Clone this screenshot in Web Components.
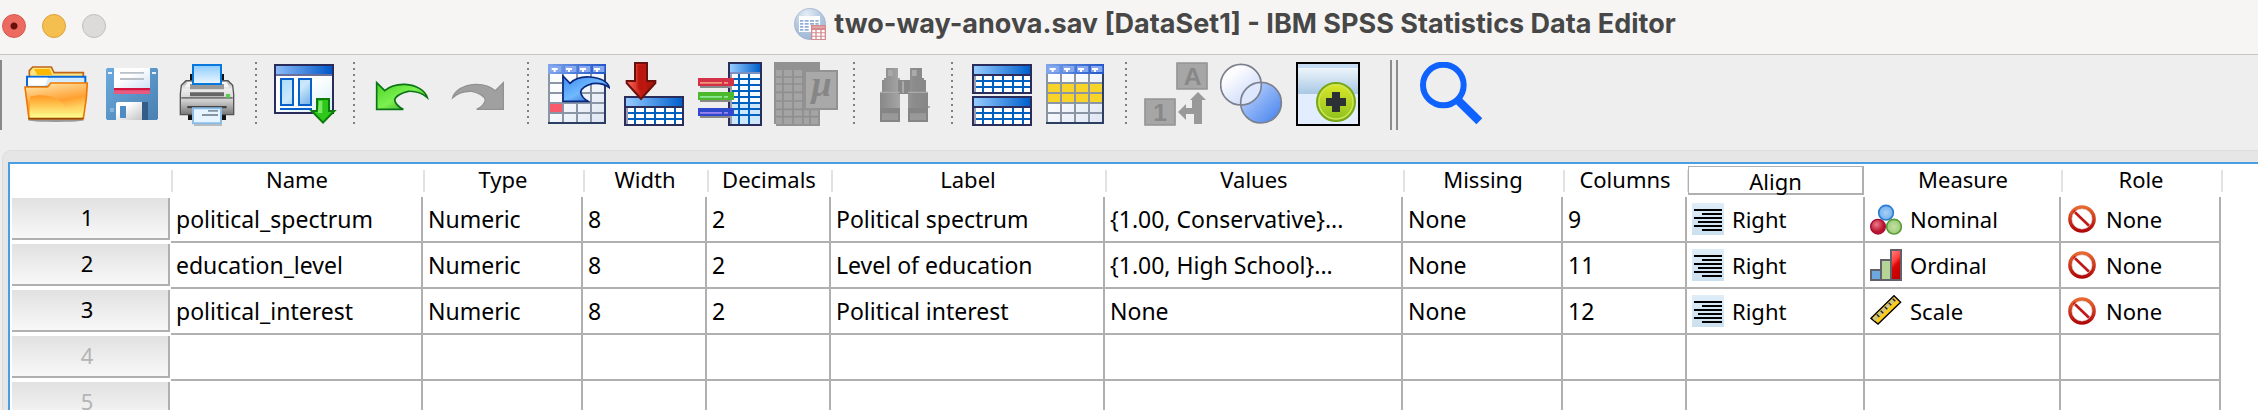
<!DOCTYPE html>
<html lang="en">
<head>
<meta charset="utf-8">
<title>two-way-anova.sav [DataSet1] - IBM SPSS Statistics Data Editor</title>
<style>
  html, body { margin: 0; height: 100%; overflow: hidden; background: #eeeeee; }
  body { font-family: "Noto Sans", "Open Sans", sans-serif; color: #000; }
</style>
</head>
<body>
<data-editor>
  <title-bar slot="title">two-way-anova.sav [DataSet1] - IBM SPSS Statistics Data Editor</title-bar>
  <tool-bar slot="tools">
    <tool-button icon="open" label="Open data document"></tool-button>
    <tool-button icon="save" label="Save this document"></tool-button>
    <tool-button icon="print" label="Print"></tool-button>
    <tool-separator></tool-separator>
    <tool-button icon="dialog" label="Recall recently used dialogs"></tool-button>
    <tool-separator></tool-separator>
    <tool-button icon="undo" label="Undo"></tool-button>
    <tool-button icon="redo" label="Redo" disabled></tool-button>
    <tool-separator></tool-separator>
    <tool-button icon="revert" label="Go to last edit"></tool-button>
    <tool-button icon="case" label="Go to case"></tool-button>
    <tool-button icon="variable" label="Go to variable"></tool-button>
    <tool-button icon="stats" label="Run descriptive statistics" disabled></tool-button>
    <tool-separator></tool-separator>
    <tool-button icon="find" label="Find" disabled></tool-button>
    <tool-separator></tool-separator>
    <tool-button icon="split" label="Split file"></tool-button>
    <tool-button icon="select" label="Select cases"></tool-button>
    <tool-separator></tool-separator>
    <tool-button icon="labels" label="Value labels" disabled></tool-button>
    <tool-button icon="sets" label="Use variable sets"></tool-button>
    <tool-button icon="custom" label="Customize toolbar"></tool-button>
    <tool-separator kind="double"></tool-separator>
    <tool-button icon="search" label="Search application"></tool-button>
  </tool-bar>
  <variable-grid></variable-grid>
</data-editor>

<script>
const sheetHeader = (x) => `
  <rect x="${x}" y="72" width="174" height="30" fill="url(#h)"/>
  <g fill="#86a8ee">${[6, 51, 93, 135].map(d => `<rect x="${x + d}" y="78" width="34" height="18"/>`).join('')}</g>
  <g fill="#fff">${[11, 54, 96, 138].map(d => `<path d="M${x + d} 84h18v6h-6v6h-6v-6h-6z"/>`).join('')}</g>`;

const sheetGrid = (x) => `
  <g fill="#8a95a6">${[42, 84, 126].map(d => `<rect x="${x + d}" y="102" width="6" height="144"/>`).join('')}
  ${[126, 156, 186, 216].map(y => `<rect x="${x + 6}" y="${y}" width="162" height="6"/>`).join('')}
  <rect x="${x}" y="102" width="6" height="150"/></g>
  <path d="M${x} 246h168v-144h6v150h-174z" fill="#2b3f63"/>`;

const sheetDefs = `<defs>
  <linearGradient id="h"><stop offset="0" stop-color="#82a6ea"/><stop offset=".5" stop-color="#4a7ad8"/><stop offset="1" stop-color="#2456c8"/></linearGradient>
  <linearGradient id="b" x2="1" y2="1"><stop offset="0" stop-color="#fff"/><stop offset=".4" stop-color="#f8fafd"/><stop offset="1" stop-color="#dde5f2"/></linearGradient></defs>`;

const blueDefs = `<defs><linearGradient id="t"><stop offset="0" stop-color="#96ccff"/><stop offset="1" stop-color="#0060cc"/></linearGradient></defs>`;

const smallTable = (x, y) => `
  <rect x="${x}" y="${y}" width="180" height="90" fill="#2a2c5c"/>
  <rect x="${x + 6}" y="${y + 6}" width="168" height="24" fill="url(#t)"/>
  <rect x="${x + 6}" y="${y + 36}" width="168" height="48" fill="#9a9cb0"/>
  <rect x="${x + 12}" y="${y + 36}" width="162" height="48" fill="#0060c0"/>
  <g fill="#fff">${[36, 54, 72].map(r => [12, 36, 66, 96, 126, 156].map(c =>
    `<rect x="${x + c}" y="${y + r}" width="${c === 12 || c === 156 ? 18 : 24}" height="12"/>`).join('')).join('')}</g>`;

const ARROW = 'M110 128L134 152C150 138 170 132 195 133C230 135 256 152 262 173C245 158 225 153 205 154C185 158 166 168 164 180C166 192 178 202 190 208H110Z';

/* Each icon: [viewBox, markup] */
const ICONS = {
  app: ['30 24 96 96', `<defs><radialGradient id="a" cx=".4" cy=".2" r=".9"><stop offset="0" stop-color="#e4edf5"/><stop offset=".5" stop-color="#b4c8e0"/><stop offset="1" stop-color="#98b2d4"/></radialGradient></defs>
    <circle cx="78" cy="72" r="47" fill="url(#a)" stroke="#9db2cc" stroke-width="2"/>
    <path d="M45 48h63v48h-63z" fill="#fff"/>
    <g fill="#93aed6"><path d="M48 60h10v5h-10zM62 60h12v5h-12zM78 60h12v5h-12zM94 60h10v5h-10zM48 69h10v5h-10zM62 69h12v5h-12zM78 69h12v5h-12zM94 69h10v5h-10zM48 78h10v5h-10zM62 78h12v5h-12zM48 87h10v5h-10zM62 87h12v5h-12z"/></g>
    <path d="M81 75h45v45h-45z" fill="#d58a90"/><path d="M85 79h37v5h-37z" fill="#e5a9ab"/>
    <path d="M85 90h9v7h-9zM98 90h11v7h-11zM113 90h9v7h-9zM85 100h9v7h-9zM98 100h11v7h-11zM113 100h9v7h-9zM85 110h9v7h-9zM98 110h11v7h-11zM113 110h9v7h-9z" fill="#fff"/>`],
  open: ['72 186 192 192', `<defs><linearGradient id="f" x2=".3" y2="1"><stop offset="0" stop-color="#fff0b0"/><stop offset=".25" stop-color="#ffcc80"/><stop offset=".6" stop-color="#ffa030"/><stop offset="1" stop-color="#fff080"/></linearGradient>
    <linearGradient id="g" x2="0" y2="1"><stop offset="0" stop-color="#ff9620"/><stop offset="1" stop-color="#ffff90"/></linearGradient></defs>
    <ellipse cx="168" cy="360" rx="84" ry="6" fill="#999"/>
    <path d="M88 230V212l10-11h56l8 17h88v14z" fill="#ffe680" stroke="#c06418" stroke-width="5"/><path d="M102 207h47l8 18h-45z" fill="#ffb800"/>
    <path d="M81 230h175v30h-175z" fill="#d4ecff" stroke="#0a68d8" stroke-width="6"/><path d="M84 233h60l-8 24h-52z" fill="#fff"/>
    <path d="M75 261h68l9-12h110l-3 45l-9 62H87z" fill="url(#f)" stroke="#f07800" stroke-width="5"/>
    <path d="M90 290c40-12 90 0 104 30c12 8 35 8 54 4l-4 29H90z" fill="url(#g)"/>
    <path d="M85 356h165" stroke="#9a4a08" stroke-width="5"/>`],
  save: ['300 186 192 192', `<defs><linearGradient id="s" x2="1" y2="1"><stop offset="0" stop-color="#6aaade"/><stop offset="1" stop-color="#4a80b2"/></linearGradient>
    <linearGradient id="m" x2="1" y2="1"><stop offset=".3" stop-color="#fff"/><stop offset="1" stop-color="#c4c4c4"/></linearGradient><linearGradient id="p" x2="1" y2="1"><stop offset=".4" stop-color="#fff"/><stop offset="1" stop-color="#cfe2f4"/></linearGradient></defs>
    <path d="M322 204h148l4 4v148l-4 4H322l-4-4V208z" fill="url(#s)"/>
    <path d="M342 204h108v60H342z" fill="url(#p)"/><path d="M360 216h72v5h-72zM360 234h72v6h-72z" fill="#b8c0c8"/>
    <path d="M342 264h108v8H342z" fill="#d4143c"/><path d="M342 271h108v11H342z" fill="#e85a80"/>
    <path d="M324 216h12v6h-12zM456 216h12v6h-12z" fill="#e8f0f8"/><path d="M330 324h12v12h-12z" fill="#84b4dc"/>
    <path d="M352 306h74v54h-78v-50z" fill="url(#m)"/><path d="M426 306h18v54h-18z" fill="#345c88"/>
    <path d="M360 318h18v36h-18z" fill="#4f8cc4"/>`],
  print: ['528 186 192 192', `<defs><linearGradient id="p" x2="0" y2="1"><stop offset="0" stop-color="#8cccff"/><stop offset="1" stop-color="#eef8ff"/></linearGradient>
    <linearGradient id="q" x2="0" y2="1"><stop offset="0" stop-color="#a8a8a8"/><stop offset=".25" stop-color="#eee"/><stop offset=".6" stop-color="#ccc"/><stop offset="1" stop-color="#777"/></linearGradient></defs>
    <path d="M570 222h102v26h-102zM564 342h114v18h-114z" fill="#111"/>
    <path d="M558 242h126l14 14l3 26v62h-160v-62l3-26z" fill="url(#q)" stroke="#555" stroke-width="4"/>
    <path d="M562 246h118l8 16h-134z" fill="#f4f4f4"/><path d="M570 252h102v16h-102z" fill="#999"/>
    <path d="M579 195h84v57h-84z" fill="url(#p)" stroke="#0878dc" stroke-width="6"/>
    <path d="M570 277h102v12h-102z" fill="#666"/><path d="M544 291h154v5H544z" fill="#777"/><path d="M678 282h12v11h-12z" fill="#5ad050"/>
    <path d="M562 318h118v7h-118z" fill="#444"/><path d="M582 372h84v6h-84z" fill="#bbb"/>
    <path d="M579 325h84v45h-84z" fill="#e6f4ff" stroke="#8abce8" stroke-width="6"/><path d="M624 330h30v5h-30zM606 342h48v6h-48z" fill="#8494a4"/>`],
  dialog: ['822 186 192 192', `<defs><linearGradient id="t"><stop offset="0" stop-color="#8cbcf8"/><stop offset="1" stop-color="#0058c8"/></linearGradient><linearGradient id="c" x2="1" y2="1"><stop offset="0" stop-color="#a8dcfc"/><stop offset=".5" stop-color="#cce8fa"/><stop offset="1" stop-color="#70b0e8"/></linearGradient>
    <linearGradient id="w" x2="1" y2="1"><stop offset=".4" stop-color="#fff"/><stop offset="1" stop-color="#d8eef8"/></linearGradient></defs>
    <path d="M822 192h180v150H822z" fill="#2a2c5c"/><path d="M828 198h168v24H828z" fill="url(#t)"/><path d="M828 228h168v108H828z" fill="url(#w)"/>
    <path d="M828 222h168v6H828z" fill="#6a6e98"/>
    <g fill="url(#c)" stroke="#0860c8" stroke-width="6"><path d="M843 237h36v78h-36zM897 237h36v78h-36z"/></g><path d="M840 324h96v6h-96z" fill="#0860c8"/>
    <path d="M951 297h36v36h16l-34 35l-34-35h16z" fill="#2ec81c" stroke="#0c7c08" stroke-width="6"/><path d="M957 303h10v36h-14z" fill="#7ae860"/>`],
  undo: ['96 66 192 192', `<defs><linearGradient id="u" x2="1" y2="1"><stop offset="0" stop-color="#4cd428"/><stop offset=".5" stop-color="#7cf050"/><stop offset="1" stop-color="#1c8c14"/></linearGradient></defs><path d="${ARROW}" fill="url(#u)" stroke="#0c7418" stroke-width="5"/>`],
  redo: ['324 66 192 192', `<path transform="matrix(-1 0 0 1 600 0)" d="${ARROW}" fill="#a0a0a0" stroke="#929292" stroke-width="4"/>`],
  revert: ['618 66 192 192', `${sheetDefs}<rect x="624" y="72" width="174" height="180" fill="url(#b)"/>${sheetHeader(624)}${sheetGrid(624)}
    <path d="M630 192h36v24h-36z" fill="#f85c6c"/>
    <defs><linearGradient id="u" x2="1" y2="1"><stop offset="0" stop-color="#3c8cf0"/><stop offset=".5" stop-color="#70b8ff"/><stop offset="1" stop-color="#0c48b0"/></linearGradient></defs>
    <path d="M669 108L690 130C704 116 724 109 750 111C782 114 804 126 808 143C790 130 772 129 757 131C738 136 724 146 722 156C724 170 734 178 744 184H669Z" fill="url(#u)" stroke="#082880" stroke-width="5"/>`],
  case: ['846 66 192 192', `${blueDefs}${smallTable(852, 168)}<defs><linearGradient id="r"><stop offset="0" stop-color="#ff6a5c"/><stop offset=".5" stop-color="#c41c14"/><stop offset="1" stop-color="#a01008"/></linearGradient></defs>
    <path d="M885 69h36v54h25v6l-43 48l-43-48v-6h25z" fill="url(#r)" stroke="#6c100c" stroke-width="6"/><path d="M893 76h18v66l-8 14l-10-14z" fill="#b81408" opacity=".7"/>`],
  variable: ['1074 66 192 192', `${blueDefs}<path d="M1164 66h102v192h-102z" fill="#2a2c5c"/><path d="M1170 72h90v24h-90z" fill="url(#t)"/><path d="M1170 96h90v6h-90z" fill="#7a90c0"/>
    <path d="M1170 102h6v150h-6z" fill="#9a9cb0"/><path d="M1176 102h84v150h-84z" fill="#0060c0"/>
    ${[0, 1, 2, 3, 4, 5, 6, 7].map(i => [1176, 1200, 1230].map(x => `<rect x="${x}" y="${102 + 18 * i}" width="${x === 1176 ? 18 : x === 1200 ? 24 : 30}" height="${i === 7 ? 24 : 12}" fill="${i > 4 ? '#cce6fc' : '#f6fbff'}"/>`).join('')).join('')}
    ${[[114, '#d43048', '#f09878'], [156, '#4cb82c', '#8ce898'], [204, '#3048cc', '#9c84f0']].map(([y, a, b]) =>
      `<path d="M1080 ${y + 24}h90v6h-90z" fill="#888"/><path d="M1074 ${y}h108v24h-108z" fill="${a}"/><path d="M1080 ${y + 12}h66v5h-66zM1152 ${y + 12}h12v5h-12z" fill="${b}"/>`).join('')}`],
  stats: ['1302 66 192 192', `<path d="M1302 66h138v192h-132v-6h-6z" fill="#929292"/><path d="M1308 90h126v162h-126z" fill="#a4a4a4"/>
    <g stroke="#8e8e8e" stroke-width="5" fill="none"><path d="M1329 90v162M1359 90v162M1389 90v162M1410 210v42M1308 111h126M1308 132h126M1308 157h126M1308 183h126M1308 208h126M1308 230h126"/></g>
    <path d="M1395 93h96v114h-96z" fill="#a9a9a9" stroke="#929292" stroke-width="6"/>
    <text x="1444" y="168" font-family="Liberation Serif, serif" font-weight="bold" font-style="italic" font-size="108" text-anchor="middle" fill="#868686">µ</text>`],
  find: ['96 66 192 192', `<defs><linearGradient id="k"><stop offset="0" stop-color="#888"/><stop offset=".4" stop-color="#a4a4a4"/><stop offset=".7" stop-color="#8c8c8c"/><stop offset="1" stop-color="#868686"/></linearGradient></defs>
    <path d="M138 84h36v30h6v42h-54v-36h6v-6h6zM210 84h36v30h6v6h6v36h-48zM120 156h60v90h-60zM204 156h60v90h-60z" fill="url(#k)"/><path d="M174 120h36v42h-36z" fill="#888"/><path d="M186 124h6v34h-6zM144 90h14v18h-14zM216 90h14v18h-14z" fill="#aaa"/>
    <path d="M120 204h60v42h-60zM204 204h60v42h-60z" fill="#858585"/><path d="M126 220h48v20h-48zM210 220h48v20h-48z" fill="#999"/><path d="M120 155h60v4h-60zM204 155h60v4h-60zM264 198h6v6h-6z" fill="#aaa"/>`],
  split: ['390 66 192 192', `${blueDefs}${smallTable(396, 72)}${smallTable(396, 168)}`],
  select: ['618 66 192 192', `${sheetDefs}<rect x="618" y="72" width="174" height="180" fill="url(#b)"/><path d="M624 132h162v54h-162z" fill="#f8d428"/>${sheetHeader(618)}${sheetGrid(618)}`],
  labels: ['72 66 192 192', `<g fill="#a6a6a6" stroke="#949494" stroke-width="5"><path d="M171 69h90v78h-90zM75 177h90v78h-90z"/></g>
    <g font-family="Liberation Sans, sans-serif" font-weight="bold" font-size="74" text-anchor="middle" fill="#888"><text x="218" y="134">A</text><text x="120" y="242">1</text></g>
    <path d="M222 252V222H198V240L174 216L198 192V204H216V180H210L234 156L258 180H246V252Z" fill="#999"/>`],
  sets: ['300 66 192 192', `<defs><linearGradient id="x" x2=".8" y2="1"><stop offset=".3" stop-color="#fcfcff"/><stop offset="1" stop-color="#c4d4f8"/></linearGradient><linearGradient id="y" x2="1" y2="1"><stop offset="0" stop-color="#ccdcff"/><stop offset="1" stop-color="#4080ec"/></linearGradient></defs>
    <circle cx="363" cy="134" r="61" fill="url(#x)"/><circle cx="423" cy="188" r="61" fill="url(#y)"/><path d="M363 195A61 61 0 0 0 423 127A61 61 0 0 0 363 195" fill="#dde8ff"/>
    <g fill="none" stroke="#7c808c" stroke-width="5"><circle cx="363" cy="134" r="61"/><circle cx="423" cy="188" r="61"/></g>`],
  custom: ['528 66 192 192', `<defs><linearGradient id="v" x2="0" y2="1"><stop offset="0" stop-color="#eef5fb"/><stop offset="1" stop-color="#a8c8e4"/></linearGradient><linearGradient id="z" x2="0" y2="1"><stop offset="0" stop-color="#dce828"/><stop offset="1" stop-color="#8cc020"/></linearGradient></defs>
    <path d="M531 69h186v186H531z" fill="#e2eefe" stroke="#000" stroke-width="6"/><path d="M534 72h180v12H534z" fill="#c6dcf2"/><path d="M534 84h180v78H534z" fill="url(#v)"/>
    <circle cx="648" cy="186" r="57" fill="url(#z)" stroke="#78a818" stroke-width="6"/><circle cx="648" cy="186" r="51" fill="none" stroke="#d0e458" stroke-width="4"/>
    <path d="M636 156h24v18h18v24h-18v18h-24v-18h-18v-24h18z" fill="#2c3034"/>`],
  search: ['900 66 192 192', `<g fill="none" stroke="#0f62fe"><circle cx="970" cy="135" r="61" stroke-width="18"/><path d="M1017 184L1078 244" stroke-width="25"/></g>`],
  right: ['36 132 96 96', `<defs><linearGradient id="l" x2="0" y2="1"><stop offset="0" stop-color="#deedf8"/><stop offset="1" stop-color="#cbe0ef"/></linearGradient></defs><path d="M36 132h96v96H36z" fill="url(#l)"/>
    <path d="M42 150h84v6h-84zM66 162h60v6h-60zM42 174h84v6h-84zM54 186h72v6h-72zM42 198h84v6h-84zM66 210h60v6h-60z"/>`],
  nominal: ['570 132 96 96', `<defs><radialGradient id="n" cx=".4" cy=".35"><stop offset="0" stop-color="#f07888"/><stop offset="1" stop-color="#b81430"/></radialGradient><radialGradient id="o"><stop offset="0" stop-color="#c4e0a4"/><stop offset="1" stop-color="#9ccc78"/></radialGradient><radialGradient id="e"><stop offset="0" stop-color="#a8d0f8"/><stop offset="1" stop-color="#70b0ec"/></radialGradient></defs>
    <circle cx="618" cy="161" r="22" fill="url(#e)" stroke="#2c7cd0" stroke-width="5"/><circle cx="642" cy="203" r="22" fill="url(#o)" stroke="#5c9c38" stroke-width="5"/><circle cx="594" cy="203" r="22" fill="url(#n)" stroke="#a80c34" stroke-width="4"/>`],
  ordinal: ['570 132 96 96', `<defs><linearGradient id="i" x2=".3" y2="1"><stop offset="0" stop-color="#ff8080"/><stop offset=".4" stop-color="#ff4040"/><stop offset=".6" stop-color="#d80808"/><stop offset="1" stop-color="#c40000"/></linearGradient></defs>
    <path d="M570 192h30v-30h30v-30h36v96h-96z" fill="#626068"/><path d="M576 198h24v24h-24z" fill="#6ca8e0"/><path d="M606 168h24v54h-24z" fill="#b4d498"/><path d="M636 138h24v84h-24z" fill="url(#i)"/>`],
  scale: ['570 132 96 96', `<path d="M573 202L642 134L662 154L594 219Z" fill="#fccc18" stroke="#000" stroke-width="4"/><path d="M578 203L642 140L649 147L585 210Z" fill="#c8c48c"/>
    <path d="M590 190l8 8M602 179l8 8M614 167l8 8M626 155l8 8M638 143l8 8" stroke="#222" stroke-width="4"/>`],
  none: ['1158 132 96 96', `<defs><linearGradient id="j" x2="0" y2="1"><stop offset="0" stop-color="#e86830"/><stop offset="1" stop-color="#b00808"/></linearGradient></defs>
    <circle cx="1206" cy="180" r="36" fill="#fff" stroke="url(#j)" stroke-width="11"/><path d="M1181 156L1231 204" stroke="#c01818" stroke-width="8"/><circle cx="1206" cy="180" r="30" fill="none" stroke="#dccccc" stroke-width="2"/>`]
};

const shadow = (host, html) => { host.attachShadow({ mode: 'open' }).innerHTML = html; };

customElements.define('app-icon', class extends HTMLElement {
  connectedCallback() {
    if (this.shadowRoot) return;
    const [box, art] = ICONS[this.getAttribute('name')];
    shadow(this, `<style>:host{display:block;flex:none;width:32px;height:32px} svg{display:block;width:100%;height:100%}</style>
      <svg viewBox="${box}" aria-hidden="true">${art}</svg>`);
  }
});

customElements.define('title-bar', class extends HTMLElement {
  connectedCallback() {
    shadow(this, `<style>
      :host{display:grid;grid-template-columns:212px 1fr;align-items:center;height:54px;background:#f6f5f3;border-bottom:1px solid #c6c6c6;
        font:bold 27px/32px Inter,sans-serif;color:#474747}
      .lights{display:flex;gap:16px;padding:0 2px 2px}
      button{appearance:none;padding:0;width:24px;height:24px;border-radius:50%;border:1px solid #d8564c;background:#ec6b60}
      .close{background:radial-gradient(circle,#6a0f0a 0 3px,#ec6b60 4px)}
      .min{background:#f5bf50;border-color:#dca23a}
      .max{background:#dcdbda;border-color:#c0bfbe}
      h1{margin:0;font:inherit;display:flex;justify-content:center;align-items:center;gap:8px;white-space:nowrap;padding-bottom:6px}
    </style>
    <div class="lights"><button class="close" aria-label="Close"></button><button class="min" aria-label="Minimize"></button><button class="max" aria-label="Zoom" disabled></button></div>
    <h1><app-icon name="app"></app-icon><span><slot></slot></span></h1>`);
  }
});

customElements.define('tool-bar', class extends HTMLElement {
  connectedCallback() {
    shadow(this, `<style>:host{display:block;background:#eee;padding:5px 0 20px}
      div{display:flex;align-items:flex-start;gap:12px;height:70px;border-left:2px solid #888;padding-left:22px}</style>
      <div role="toolbar" aria-label="Main"><slot></slot></div>`);
  }
});

customElements.define('tool-button', class extends HTMLElement {
  connectedCallback() {
    const off = this.hasAttribute('disabled') ? 'disabled' : '';
    shadow(this, `<style>:host{display:block;flex:none;padding-top:2px} button{appearance:none;display:block;border:0;padding:0;background:none;color:inherit}
      app-icon{width:64px;height:64px}</style>
      <button ${off} aria-label="${this.getAttribute('label')}"><app-icon name="${this.getAttribute('icon')}"></app-icon></button>`);
  }
});

customElements.define('tool-separator', class extends HTMLElement {
  connectedCallback() {
    shadow(this, `<style>:host{display:block;flex:none;box-sizing:border-box;width:2px;height:62px;margin:2px 5px 0 3px;
        background:repeating-linear-gradient(#808080 0 2px,transparent 2px 6px)}
      :host([kind=double]){width:8px;height:70px;margin:0 10px 0 18px;background:none;border:solid #8c8c8c;border-width:0 2px}</style>`);
  }
});

const COLUMNS = [['Name', 252], ['Type', 160], ['Width', 124], ['Decimals', 124], ['Label', 274], ['Values', 298], ['Missing', 160], ['Columns', 124], ['Align', 178], ['Measure', 196], ['Role', 160]];
const ROWS = [
  ['political_spectrum', 'Numeric', '8', '2', 'Political spectrum', '{1.00, Conservative}...', 'None', '9', ['right', 'Right'], ['nominal', 'Nominal'], ['none', 'None']],
  ['education_level', 'Numeric', '8', '2', 'Level of education', '{1.00, High School}...', 'None', '11', ['right', 'Right'], ['ordinal', 'Ordinal'], ['none', 'None']],
  ['political_interest', 'Numeric', '8', '2', 'Political interest', 'None', 'None', '12', ['right', 'Right'], ['scale', 'Scale'], ['none', 'None']],
  [], []
];

customElements.define('variable-grid', class extends HTMLElement {
  connectedCallback() {
    const cell = (v) => Array.isArray(v) ? `<div class="pick"><app-icon name="${v[0]}"></app-icon><span>${v[1]}</span></div>` : (v || '');
    shadow(this, `<style>
      :host{display:block;flex:1;min-height:0;overflow:hidden;margin-left:2px;padding:11px 0 0 5px;background:#e6e6e6;border:1px solid #dcdcdc;border-width:1px 0 0 1px;border-top-left-radius:9px}
      .frame{height:100%;overflow:hidden;background:#fff;border:solid #4a9ee0;border-width:2px 0 0 2px}
      table{width:100%;table-layout:fixed;border-collapse:separate;border-spacing:0;font-size:22px;line-height:30px}
      th{font-weight:normal;padding:0}
      thead th{box-sizing:border-box;height:33px;padding-bottom:3px;background:linear-gradient(#e2e2e2,#e2e2e2) 0 6px/2px 22px no-repeat}
      thead th:first-child,thead th.after{background:none}
      thead th.active{padding:0}
      .active div{box-sizing:border-box;height:29px;margin:0 1px;line-height:28px;border:solid #b0b0b0;border-width:1px 2px 2px 1px;background:#fff}
      tbody th{height:46px;padding:1px 1px 3px 2px;box-sizing:border-box}
      tbody th div{box-sizing:border-box;height:42px;padding-right:6px;line-height:38px;border:solid #b0b0b0;border-width:0 2px 2px 0;background:linear-gradient(#e1e1e1,#f8f8f8)}
      .unused{color:#b4b4b4}
      td{box-sizing:border-box;height:46px;padding:0 0 0 5px;border:solid #b0b0b0;border-width:0 2px 2px 0;white-space:nowrap;overflow:hidden;font-size:23px}
      td.blank{border:0}
      .pick{display:flex;align-items:center;gap:8px;font-size:22px}
    </style>
    <div class="frame"><table aria-label="Variable View">
      <colgroup><col style="width:161px">${COLUMNS.map(c => `<col style="width:${c[1]}px">`).join('')}<col></colgroup>
      <thead><tr><th></th>${COLUMNS.map(([n]) => n === 'Align' ? `<th scope="col" class="active"><div>${n}</div></th>` : `<th scope="col"${n === 'Measure' ? ' class="after"' : ''}>${n}</th>`).join('')}<th></th></tr></thead>
      <tbody>${ROWS.map((r, i) => `<tr><th scope="row"${r.length ? '' : ' class="unused"'}><div>${i + 1}</div></th>${COLUMNS.map((c, j) => `<td>${cell(r[j])}</td>`).join('')}<td class="blank"></td></tr>`).join('')}</tbody>
    </table></div>`);
  }
});

customElements.define('data-editor', class extends HTMLElement {
  connectedCallback() {
    shadow(this, `<style>:host{display:flex;flex-direction:column;height:100vh}</style>
      <slot name="title"></slot><slot name="tools"></slot><slot></slot>`);
  }
});
</script>
</body>
</html>
